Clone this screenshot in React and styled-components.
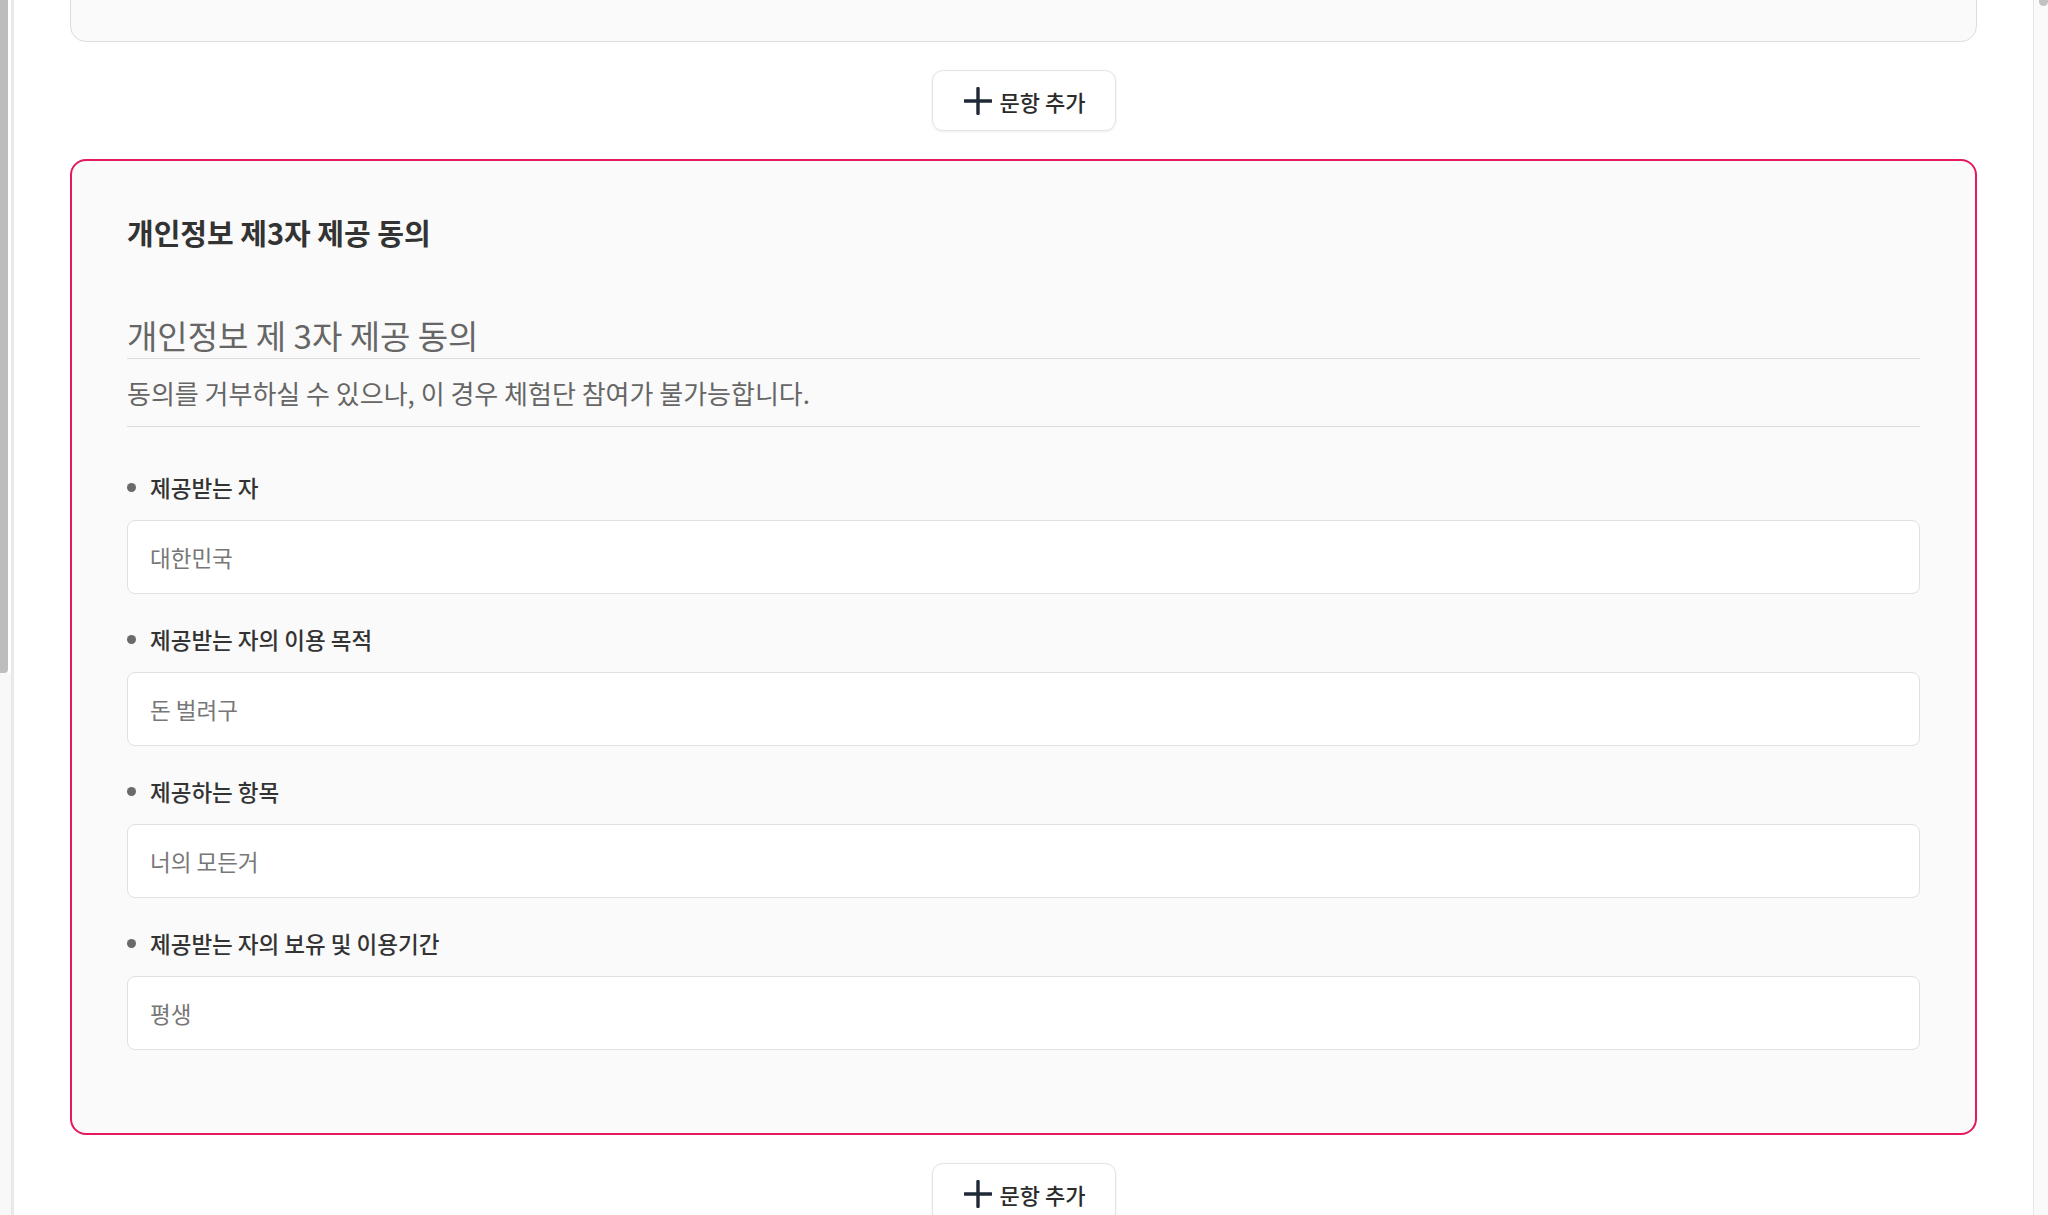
import React from "react";
import styled, { createGlobalStyle } from "styled-components";

const GlobalStyle = createGlobalStyle`
  html, body {
    margin: 0;
    padding: 0;
    background: #ffffff;
    overflow: hidden;
  }
  body {
    font-family: "Noto Sans CJK KR", "Noto Sans", sans-serif;
    color: #333333;
  }
  * { box-sizing: border-box; }
`;

const Frame = styled.div`
  display: flex;
  height: 1215px;
  overflow: hidden;
  background: #ffffff;
`;

const LeftRail = styled.div`
  width: 14px;
  flex-shrink: 0;
  display: flex;
  flex-direction: column;
  background: #f8f8f8;
  border-right: 3px solid #e9e9e9;
`;

const LeftThumb = styled.div`
  width: 8px;
  height: 673px;
  background: #bdbdbd;
  border-bottom-right-radius: 4px;
`;

const LeftGap = styled.div`
  height: 673px;
  width: 3px;
  margin-left: 8px;
  margin-top: -673px;
  background: #ffffff;
`;

const RightRail = styled.div`
  width: 15px;
  flex-shrink: 0;
  display: flex;
  flex-direction: column;
  align-items: flex-end;
  background: #fafafa;
  border-left: 1px solid #e6e6e6;
`;

const RightThumb = styled.div`
  width: 9px;
  height: 8px;
  margin-top: -2px;
  background: #c2c2c2;
  border-radius: 0 0 5px 5px;
`;

const Main = styled.main`
  flex: 1;
  min-width: 0;
  padding: 0 56px;
  display: flex;
  flex-direction: column;
  align-items: stretch;
  gap: 28px;
`;

const TopCard = styled.section`
  height: 240px;
  margin-top: -198px;
  flex-shrink: 0;
  background: #fafafa;
  border: 1px solid #dedede;
  border-radius: 16px;
`;

const ButtonRow = styled.div`
  display: flex;
  justify-content: center;
  flex-shrink: 0;
`;

const AddButton = styled.button`
  width: 184px;
  height: 61px;
  display: flex;
  align-items: center;
  justify-content: center;
  gap: 8px;
  background: #ffffff;
  border: 1px solid #e4e4e4;
  border-radius: 11px;
  box-shadow: 0 1px 3px rgba(0, 0, 0, 0.07);
  font-family: "Noto Sans CJK KR", "Noto Sans", sans-serif;
  font-size: 22px;
  font-weight: 500;
  color: #2b2b2b;
  cursor: pointer;
  padding: 0 0 0 2px;
`;

const Card = styled.section`
  flex-shrink: 0;
  background: #fafafa;
  border: 2px solid ${(p) => (p.$active ? "#e5195f" : "#dedede")};
  border-radius: 16px;
  padding: 53px 55px 83px;
  display: flex;
  flex-direction: column;
`;

const CardTitle = styled.h2`
  margin: 0;
  font-size: 29px;
  line-height: 36px;
  font-weight: 700;
  color: #333333;
`;

const HeadingInput = styled.input`
  margin-top: 61px;
  height: ${(p) => p.$h}px;
  width: 100%;
  border: none;
  border-bottom: 1px solid #dcdcdc;
  background: transparent;
  padding: 0;
  font-family: "Noto Sans CJK KR", "Noto Sans", sans-serif;
  font-size: ${(p) => p.$size}px;
  color: #666666;
  outline: none;
  &:focus { outline: none; }
`;

const DescInput = styled(HeadingInput)`
  margin-top: 0;
`;

const Fields = styled.div`
  margin-top: 45px;
  display: flex;
  flex-direction: column;
  gap: 30px;
`;

const Field = styled.div`
  display: flex;
  flex-direction: column;
  gap: 18px;
`;

const Label = styled.label`
  display: flex;
  align-items: center;
  gap: 14px;
  height: 30px;
  font-size: 22.5px;
  line-height: 30px;
  font-weight: 500;
  color: #333333;
  &::before {
    content: "";
    width: 9px;
    height: 9px;
    border-radius: 50%;
    background: #6a6a6a;
    flex-shrink: 0;
  }
`;

const TextBox = styled.input`
  height: 74px;
  width: 100%;
  background: #ffffff;
  border: 1.5px solid #e1e1e1;
  border-radius: 8px;
  padding: 0 22px;
  font-family: "Noto Sans CJK KR", "Noto Sans", sans-serif;
  font-size: 22.5px;
  color: #777777;
  outline: none;
`;

const PlusIcon = () => (
  <svg width="28" height="28" viewBox="0 0 28 28" fill="none" aria-hidden="true">
    <path d="M14 1.5V26.5M1 14H27" stroke="#1f2937" strokeWidth="3.4" strokeLinecap="round" />
  </svg>
);

const fields = [
  { label: "제공받는 자", value: "대한민국" },
  { label: "제공받는 자의 이용 목적", value: "돈 벌려구" },
  { label: "제공하는 항목", value: "너의 모든거" },
  { label: "제공받는 자의 보유 및 이용기간", value: "평생" },
];

const AddClauseButton = () => (
  <ButtonRow>
    <AddButton type="button">
      <PlusIcon />
      <span>문항 추가</span>
    </AddButton>
  </ButtonRow>
);

export default function App() {
  return (
    <>
      <GlobalStyle />
      <Frame>
        <LeftRail>
          <LeftThumb />
          <LeftGap />
        </LeftRail>
        <Main>
          <TopCard />
          <AddClauseButton />
          <Card $active>
            <CardTitle>개인정보 제3자 제공 동의</CardTitle>
            <HeadingInput $h={48} $size={33} defaultValue="개인정보 제 3자 제공 동의" />
            <DescInput
              $h={68}
              $size={26}
              defaultValue="동의를 거부하실 수 있으나, 이 경우 체험단 참여가 불가능합니다."
            />
            <Fields>
              {fields.map((f) => (
                <Field key={f.label}>
                  <Label>{f.label}</Label>
                  <TextBox defaultValue={f.value} />
                </Field>
              ))}
            </Fields>
          </Card>
          <AddClauseButton />
        </Main>
        <RightRail>
          <RightThumb />
        </RightRail>
      </Frame>
    </>
  );
}
